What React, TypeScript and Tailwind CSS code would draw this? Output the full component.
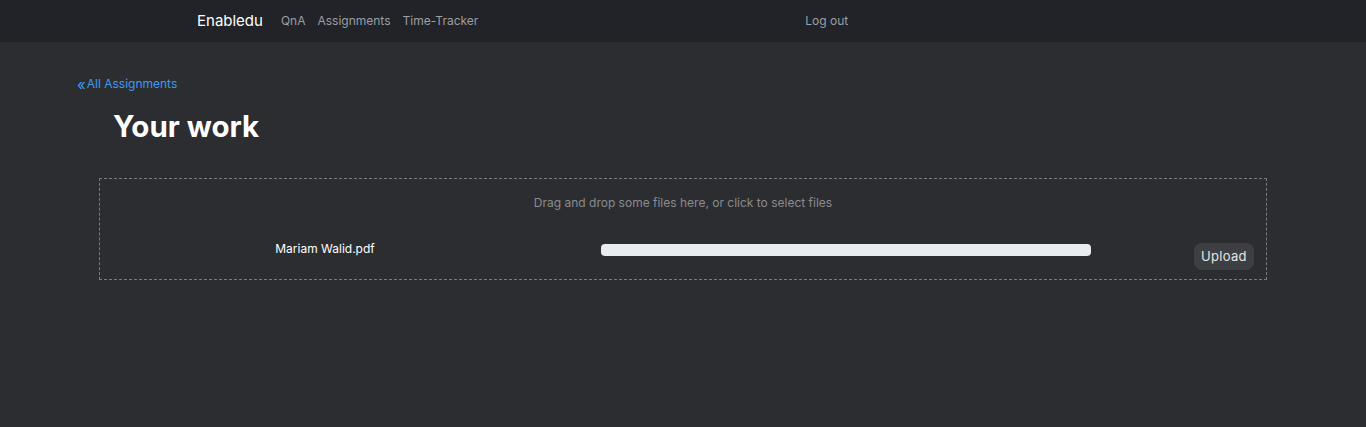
export default function App() {
  return (
    <div className="min-h-[427px] bg-[#2c2d31] font-['Inter','Noto_Sans',sans-serif]">
      {/* Top navigation */}
      <nav className="flex h-[42px] items-center bg-[#212328]">
        <span className="ml-[197px] text-[15px] text-white">Enabledu</span>
        <div className="ml-[18px] flex gap-[12px] text-[12px] text-[#9c9ea2]">
          <a>QnA</a>
          <a>Assignments</a>
          <a>Time-Tracker</a>
        </div>
        <a className="ml-[327px] text-[12px] text-[#9c9ea2]">Log out</a>
      </nav>

      <main className="pt-[34px]">
        <a className="ml-[77px] flex items-center text-[12px] leading-[16px] text-[#3d9bf0]">
          <span className="mr-[1px] text-[15px] leading-none">«</span>All Assignments
        </a>
        <h1 className="ml-[113px] mt-[16px] text-[29.5px] font-bold leading-[36px] text-white">Your work</h1>

        {/* Dropzone */}
        <div className="mx-[99px] mt-[34px] h-[102px] border border-dashed border-[#7a7b7f] pt-[16px]">
          <p className="text-center text-[12px] leading-[16px] text-[#8a8b8f]">
            Drag and drop some files here, or click to select files
          </p>
          <div className="mt-[30px] flex items-start">
            <span className="w-[450px] text-center text-[12px] leading-[16px] text-white">Mariam Walid.pdf</span>
            <div className="ml-[51px] mt-[3px] h-[12px] w-[490px] rounded-[4px] bg-[#e9ecef]" />
            <button className="ml-auto mr-[12px] mt-[2px] h-[27px] w-[60px] rounded-[8px] bg-[#3e3f42] text-[13px] tracking-[0.3px] text-[#e6e6e6]">
              Upload
            </button>
          </div>
        </div>
      </main>
    </div>
  );
}
